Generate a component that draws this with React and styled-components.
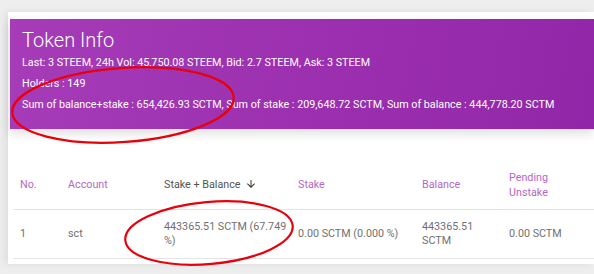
import React from 'react'
import styled, { createGlobalStyle } from 'styled-components'

const GlobalStyle = createGlobalStyle`
  html, body {
    margin: 0;
    padding: 0;
    background: #eeeeee;
    font-family: Roboto, "Liberation Sans", sans-serif;
  }
`;

const Page = styled.div`
  position: relative;
  width: 594px;
  height: 274px;
  overflow: hidden;
  background: #eeeeee;
`;

const Panel = styled.div`
  margin: 12px 0 0 8px;
  height: 252px;
  background: #ffffff;
  box-shadow: -3px 0 8px rgba(0, 0, 0, 0.07);
  padding-top: 7px;
  box-sizing: border-box;
`;

const InfoCard = styled.div`
  margin-left: 2px;
  padding: 9px 12px 14px;
  background: linear-gradient(100deg, #a63cb8 0%, #9a2eae 60%, #9127a8 100%);
  color: #ffffff;
  box-shadow: 0 4px 10px rgba(0, 0, 0, 0.14);
  height: 110px;
  box-sizing: border-box;
`;

const Title = styled.div`
  font-size: 20px;
  font-weight: 300;
  line-height: 24px;
`;

const InfoLine = styled.div`
  font-size: 10.75px;
  line-height: 21px;
  white-space: nowrap;
`;

const Table = styled.table`
  margin: 31px 0 0 5px;
  width: 589px;
  table-layout: fixed;
  border-collapse: collapse;
  font-size: 10.75px;
`;

const HeadCell = styled.th`
  text-align: left;
  font-weight: 400;
  line-height: 15px;
  padding: 9px ${p => (p.$last ? '24px' : '7px')} 9px 7px;
  height: 31px;
  color: ${p => (p.$active ? '#555555' : '#b567c7')};
  border-bottom: 1px solid #e4e4e4;
  vertical-align: middle;
`;

const Cell = styled.td`
  line-height: 14px;
  padding: 10px 4px 10px 7px;
  color: #707070;
  border-bottom: 1px solid #e4e4e4;
  vertical-align: middle;
`;

const SortIcon = styled.svg`
  width: 12px;
  height: 12px;
  margin-left: 4px;
  vertical-align: -2px;
  fill: #333333;
`;

const Marks = styled.svg`
  position: absolute;
  left: 0;
  top: 0;
  pointer-events: none;
`;

const columns = [
  { label: 'No.', width: 48 },
  { label: 'Account', width: 96 },
  { label: 'Stake + Balance', width: 134, active: true },
  { label: 'Stake', width: 124 },
  { label: 'Balance', width: 87 },
  { label: 'Pending Unstake', width: 100, last: true },
];

const rows = [
  ['1', 'sct', '443365.51 SCTM (67.749 %)', '0.00 SCTM (0.000 %)', '443365.51 SCTM', '0.00 SCTM'],
];

export default function App() {
  return (
    <>
      <GlobalStyle />
      <Page>
        <Panel>
          <InfoCard>
            <Title>Token Info</Title>
            <InfoLine>Last: 3 STEEM, 24h Vol: 45,750.08 STEEM, Bid: 2.7 STEEM, Ask: 3 STEEM</InfoLine>
            <InfoLine>Holders : 149</InfoLine>
            <InfoLine>Sum of balance+stake : 654,426.93 SCTM, Sum of stake : 209,648.72 SCTM, Sum of balance : 444,778.20 SCTM</InfoLine>
          </InfoCard>
          <Table>
            <colgroup>
              {columns.map(c => <col key={c.label} style={{ width: c.width }} />)}
            </colgroup>
            <thead>
              <tr>
                {columns.map(c => (
                  <HeadCell key={c.label} $active={c.active} $last={c.last}>
                    {c.label}
                    {c.active && (
                      <SortIcon viewBox="0 0 24 24">
                        <path d="M20 12l-1.41-1.41L13 16.17V4h-2v12.17l-5.58-5.59L4 12l8 8 8-8z" />
                      </SortIcon>
                    )}
                  </HeadCell>
                ))}
              </tr>
            </thead>
            <tbody>
              {rows.map(r => (
                <tr key={r[0]}>
                  {r.map((v, i) => <Cell key={i}>{v}</Cell>)}
                </tr>
              ))}
            </tbody>
          </Table>
        </Panel>
        <Marks width="594" height="274">
          <ellipse cx="123" cy="105" rx="111" ry="37" transform="rotate(-4 123 105)" fill="none" stroke="#e8000b" strokeWidth="2.2" />
          <ellipse cx="209" cy="233" rx="84" ry="31" transform="rotate(-5 209 233)" fill="none" stroke="#e8000b" strokeWidth="2.2" />
        </Marks>
      </Page>
    </>
  )
}
